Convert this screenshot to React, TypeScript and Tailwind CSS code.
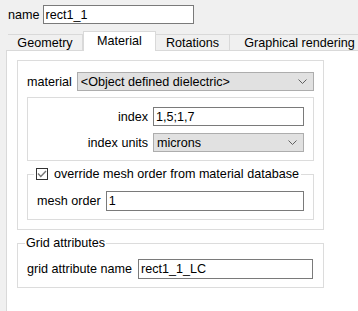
const Chevron = () => (
  <svg width="9" height="6" viewBox="0 0 9 6" className="shrink-0">
    <polyline points="0.5,0.5 4.5,4.5 8.5,0.5" fill="none" stroke="#606060" strokeWidth="1" />
  </svg>
);

const Select = ({ value, className }: { value: string; className?: string }) => (
  <div
    className={`flex h-[19px] items-center justify-between border border-[#adadad] bg-[#e1e1e1] pl-[3px] pr-[6px] ${className ?? ''}`}
  >
    <span className="truncate">{value}</span>
    <Chevron />
  </div>
);

const Input = ({ value, className }: { value: string; className?: string }) => (
  <div className={`flex h-[19px] items-center border border-[#7a7a7a] bg-white pl-[2px] ${className ?? ''}`}>
    {value}
  </div>
);

const tabs = ['Geometry', 'Material', 'Rotations', 'Graphical rendering'];
const tabWidths = ['w-[75px]', 'w-[73px]', 'w-[74px]', 'w-[140px]'];

const App = () => {
  return (
    <div
      className="flex h-[311px] w-[358px] flex-col overflow-hidden bg-[#f0f0f0] text-[12.6px] leading-[14px] text-black"
      style={{ fontFamily: '"Liberation Sans", Arial, sans-serif' }}
    >
      {/* name row */}
      <div className="flex items-center gap-[3px] pl-[8px] pt-[5px]">
        <span>name</span>
        <Input value="rect1_1" className="w-[151px]" />
      </div>

      {/* tabs */}
      <div className="relative z-10 -mb-px mt-[7px] flex h-[20px] items-end pl-[8px]">
        {tabs.map((t, i) => {
          const active = t === 'Material';
          return (
            <div
              key={t}
              className={`flex shrink-0 justify-center border border-[#d9d9d9] ${tabWidths[i]} ${
                active ? 'h-[20px] border-b-0 bg-white pt-[2px]' : 'h-[17px] border-l-0 bg-[#f0f0f0] pt-[1px]'
              } ${i === 0 ? 'border-l' : ''} ${i === 2 ? 'border-l-0' : ''}`}
            >
              {t}
            </div>
          );
        })}
      </div>

      {/* panel */}
      <div className="ml-[6px] flex-1 border-l border-t border-[#d9d9d9] bg-white pl-[10px] pt-[9px]">
        {/* material group */}
        <div className="w-[307px] border border-[#dcdcdc] px-[9px] pb-[9px] pt-[11px]">
          <div className="flex items-center gap-[5px]">
            <span>material</span>
            <Select value="<Object defined dielectric>" className="flex-1" />
          </div>

          <div className="mt-[6px] flex flex-col gap-[7px] border border-[#dcdcdc] pb-[8px] pr-[9px] pt-[9px]">
            <div className="flex items-center gap-[5px]">
              <span className="w-[120px] text-right">index</span>
              <Input value="1,5;1,7" className="flex-1" />
            </div>
            <div className="flex items-center gap-[5px]">
              <span className="w-[120px] text-right">index units</span>
              <Select value="microns" className="flex-1" />
            </div>
          </div>

          <fieldset className="mt-[6px] border border-[#dcdcdc] pb-[8px] pl-[9px] pr-[9px] pt-[10px]">
            <legend className="-ml-[3px] flex items-center gap-[6px] px-[2px]">
              <span className="flex h-[12px] w-[12px] items-center justify-center border border-[#333333] bg-white">
                <svg width="10" height="8" viewBox="0 0 10 8">
                  <polyline points="1,3.5 3.8,6.5 9,1" fill="none" stroke="#777777" strokeWidth="1.4" />
                </svg>
              </span>
              <span>override mesh order from material database</span>
            </legend>
            <div className="flex items-center gap-[5px]">
              <span>mesh order</span>
              <Input value="1" className="h-[20px] flex-1" />
            </div>
          </fieldset>
        </div>

        {/* grid attributes */}
        <fieldset className="mt-[6px] w-[307px] border border-[#dcdcdc] pb-[8px] pl-[9px] pr-[10px] pt-[9px]">
          <legend className="-ml-[2px] px-[1px]">Grid attributes</legend>
          <div className="flex items-center gap-[6px]">
            <span>grid attribute name</span>
            <Input value="rect1_1_LC" className="h-[20px] flex-1" />
          </div>
        </fieldset>
      </div>
    </div>
  );
};

export default App;
